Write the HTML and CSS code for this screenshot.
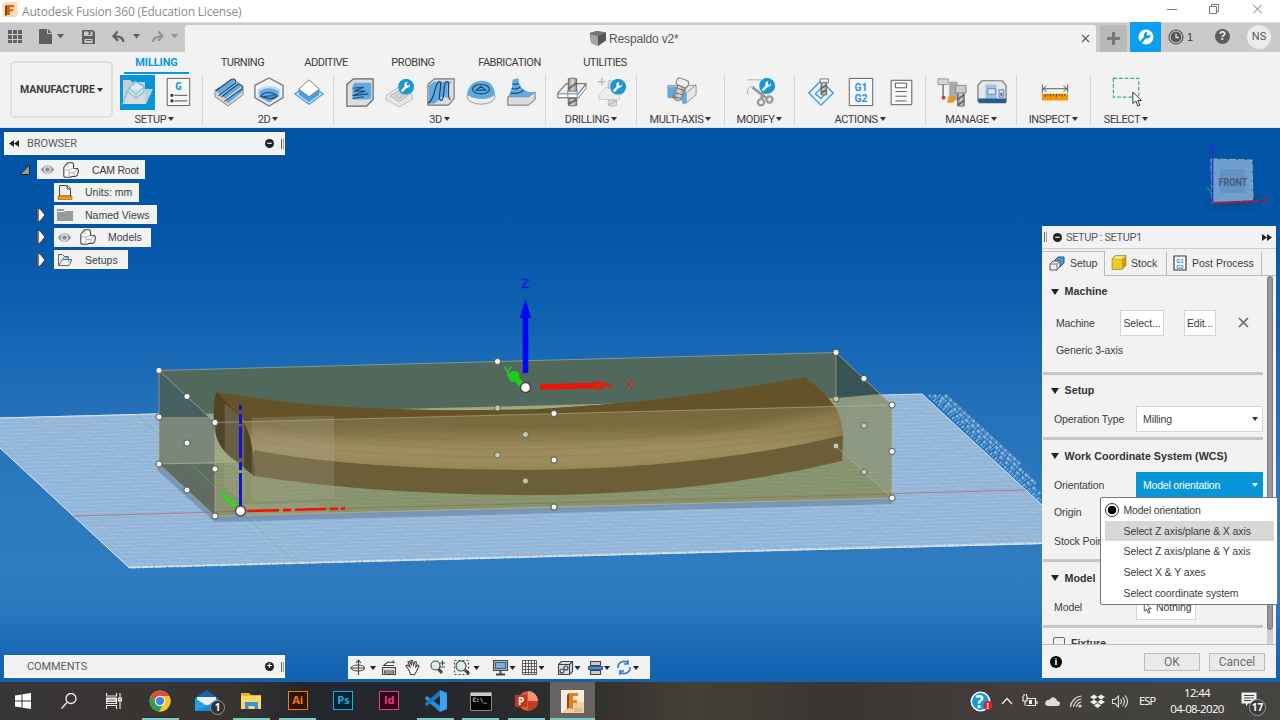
FILE: index.html
```html
<!DOCTYPE html>
<html lang="en">
<head>
<meta charset="utf-8">
<title>Autodesk Fusion 360 (Education License)</title>
<link rel="stylesheet" href="styles.css">
</head>
<body>
<svg class="defs" width="0" height="0">
  <defs>
    <linearGradient id="gBit"><stop offset="0" stop-color="#888"/><stop offset=".5" stop-color="#ddd"/><stop offset="1" stop-color="#888"/></linearGradient>
    <symbol id="wrench" viewBox="0 0 16 16"><circle cx="8" cy="8" r="8" fill="#1b97d5"/><path d="M4.2 11.8l4-4" stroke="#fff" stroke-width="2.4" stroke-linecap="round"/><path d="M11.900 5.200a2.900 2.900 0 1 1-2.300-2.100L8.400 5l.6 1.600 1.600.4z" fill="#fff"/></symbol>
    <symbol id="comp" viewBox="0 0 16 16"><path d="M.8 5.500L4.500.800h5l1 1.500v4l4 .2 1 2-1 4.500-2 1.500H9l-2 .8H1.500L.8 14z" fill="#fafafa" stroke="#444" stroke-width="1.100"/><path d="M1.500 8H6v7M6 8l3.500-1.500M6.500 10.500H11V14M11 10.500l3-3.500M5 1v4.500" fill="none" stroke="#aaa" stroke-width=".9"/></symbol>
    <symbol id="eye" viewBox="0 0 16 12"><path d="M.5 6Q8-3.500 15.500 6 8 15.500.5 6z" fill="#999"/><circle cx="8" cy="6" r="3.800" fill="#eee"/><circle cx="8" cy="6" r="2.500" fill="#888"/></symbol>
    <symbol id="openArrow" viewBox="0 0 10 14"><path d="M1 1L4 .800l5 6.200-5 6.200L1 13z" fill="#f4f4f4" stroke="#3a3a3a"/><path d="M2 1.500v11" stroke="#555" stroke-width="1.600"/></symbol>
    <symbol id="cursor" viewBox="0 0 10 16"><path d="M1 1v11.500l3-2.500 2 5 2-.8-2-4.700h3.500z" fill="#fff" stroke="#333"/></symbol>
  </defs>
</svg>

<header class="titlebar">
  <svg class="app" width="16" height="16" viewBox="0 0 16 16"><path d="M0 2l4-2h11l1 13-3 2H1z" fill="#fbd9b8"/><path d="M5 3h7v2.300H8v2h3.300v2H8V13H5z" fill="#c66a16"/><path d="M5 3L3 4v10l2-1z" fill="#8a4208"/></svg>
  <span class="title">Autodesk Fusion 360 (Education License)</span>
  <svg class="win" width="96" height="14" viewBox="0 0 96 14" fill="none" stroke="#777"><path d="M1 7.500h10M43.500 4.500h7v7h-7zM45.500 4V2.500h7v7H51M87 2.500l9 9M96 2.500l-9 9"/></svg>
</header>

<nav class="docbar">
  <div class="quick">
    <svg width="185" height="30" viewBox="0 22 185 30" fill="#606060">
      <path d="M8 30h4v4H8zM13 30h4v4h-4zM18 30h4v4h-4zM8 35h4v4H8zM13 35h4v4h-4zM18 35h4v4h-4zM8 40h4v3H8zM13 40h4v3h-4zM18 40h4v3h-4zM39 29h8v5h5v10H39zM48 29l4 4h-4zM57 34h7l-3.500 4.500z"/>
      <path d="M82 30h11l2 2v12H82zM84 31.500v4.500h8.500v-4.500zM84.500 39v4h8v-4z" fill-rule="evenodd"/><path d="M88.500 31h2v4h-2zM86 40h5.500v1H86z"/>
      <path d="M123.500 42q0-5.500-8.500-5.700M117.500 31.500l-4 4.700 4.500 4.500" fill="none" stroke="#606060" stroke-width="2.200"/><path d="M133 34h7l-3.500 4.500z"/>
      <g opacity=".5"><path d="M153 42q0-5.500 8.500-5.700M158.500 31.500l4 4.700-4.500 4.500" fill="none" stroke="#606060" stroke-width="2.200"/><path d="M171 34h7l-3.500 4.500z"/></g>
    </svg>
  </div>
  <div class="doctab">
    <svg width="16" height="15" viewBox="0 0 16 15"><path d="M0 2l7-2 9 1.500v8L8 15 1 12z" fill="#555"/><path d="M1 3l7 2v10l-7-3z" fill="#a5a5a5"/><path d="M0 2l7-2 9 1.500L8 5z" fill="#777"/></svg>
    <span>Respaldo v2*</span>
    <svg class="tabx" width="9" height="9" viewBox="0 0 9 9" stroke="#666" stroke-width="1.400"><path d="M1 1l7 7M8 1L1 8"/></svg>
  </div>
  <div class="plus"><svg width="13" height="13" viewBox="0 0 13 13"><path d="M0 6.500h13M6.500 0v13" stroke="#777" stroke-width="3"/></svg></div>
  <div class="ext"><svg width="16" height="16" viewBox="0 0 16 16"><circle cx="8" cy="8" r="7.500" fill="#fff"/><path d="M3.500 12.500l4.500-5" stroke="#0a9ce5" stroke-width="2.600"/><path d="M12.500 5.500a3.400 3.400 0 1 1-3-2.700L8.500 5.500l1.700 1.300z" fill="#0a9ce5"/><path d="M0 16L4 12" stroke="#0a9ce5" stroke-width="2"/></svg></div>
  <svg class="clockico" width="16" height="16" viewBox="0 0 16 16"><circle cx="8" cy="8" r="7" fill="none" stroke="#555" stroke-width="1.200"/><circle cx="8" cy="8" r="5.400" fill="#555"/><path d="M8 4.500V8.500h3" fill="none" stroke="#ddd" stroke-width="1.300"/></svg>
  <span class="jobs">1</span>
  <span class="help">?</span>
  <span class="avatar">NS</span>
</nav>

<section class="ribbon">
  <div class="workspace">MANUFACTURE <i class="dn"></i></div>
  <div class="tools">
    <div class="tabs">
      <span class="t1 on"><b>MILLING</b></span><span class="t2">TURNING</span><span class="t3">ADDITIVE</span><span class="t4">PROBING</span><span class="t5">FABRICATION</span><span class="t6">UTILITIES</span>
    </div>
    <div class="groups">
      <div class="group g1"><div class="icons">
        <svg class="ico active" viewBox="0 0 35 35"><path d="M3 5h7l2 2h13v22H3z" fill="#c9cfd3"/><path d="M6 17L15 6l10 6-8 12-9-3z" fill="#d8eefa" stroke="#6bbbe2"/><path d="M9 14h24l-7 15H4z" fill="#dcdcdc" fill-opacity=".85"/><path d="M9 13l7-6 8 5-8 7zM9 13v5l7 5v-4M24 12v5l-8 6M2 30L8 16" fill="none" stroke="#70bfe4"/></svg>
        <svg class="ico" viewBox="0 0 32 32"><path d="M4.500 1.500h24v29h-24z" fill="#f7f7f7" stroke="#5a5a5a"/><text x="16.500" y="14" class="gtext">G</text><path d="M12 19.500h14M12 25.500h14" stroke="#444"/><path d="M8 18h3v3H8zM8 24h3v3H8z" fill="#333"/></svg>
      </div><div class="cap">SETUP<i class="dn"></i></div></div>
      <div class="group g2"><div class="icons">
        <svg class="ico" viewBox="0 0 32 32"><path d="M1 14L21 3l10 7v9L15 31 1 21z" fill="#d5d5d5" stroke="#888"/><path d="M1 14L19 3l4 3L6 18zM8 20l17-13 4 3L12 23zM13 25l18-13v3L15 28z" fill="#62a9de"/><path d="M2 15L18 3q4-2 5 1t-2 4L5 20M8 21L25 8q4-1 5 2t-2 4L11 26" fill="none" stroke="#174d74" stroke-width="1.200"/></svg>
        <svg class="ico" viewBox="0 0 32 32"><path d="M1 9l15-8 15 8v13l-15 9-15-9z" fill="#f3f3f3" stroke="#777" stroke-width="1.400"/><path d="M4 13q12-7 24 0v8l-12 7-12-7z" fill="#bbdcf4"/><path d="M6 15q10-6 20 0v6l-10 6-10-6z" fill="#62a9de"/><path d="M7 21q4-6 12-4l6 3q-5 5-12 2zM9 21q6-1 13-1" fill="none" stroke="#174d74" stroke-width="1.200"/></svg>
        <svg class="ico" viewBox="0 0 32 32"><path d="M1 18l15-10 15 10-15 11z" fill="none" stroke="#2f9bea" stroke-width="1.300"/><path d="M5 13v6l11 8 11-8v-6L16 20z" fill="#4c9ddb"/><path d="M5 13L16 3l11 10-11 8z" fill="#fff" stroke="#777"/></svg>
      </div><div class="cap">2D<i class="dn"></i></div></div>
      <div class="group g3"><div class="icons">
        <svg class="ico" viewBox="0 0 32 32"><path d="M2 8l7-6h21v22l-7 7H2z" fill="#ddd" stroke="#666" stroke-width="1.300"/><path d="M10 6h18v17l-4 1H8V10z" fill="#62a9de"/><path d="M8 12l12-1-10 4 12 0-14 5 17-2M8 23l12-2" fill="none" stroke="#174d74" stroke-width="1.200"/></svg>
        <svg class="ico" viewBox="0 0 32 32"><path d="M1 20l13-9 15 8v5l-14 8-14-8z" fill="#e6e6e6" stroke="#bbb"/><path d="M6 20l8-5 10 5-9 6zM11 20l4-2 4 2-4 3z" fill="#ddd" stroke="#aaa"/><use href="#wrench" x="14" y="2" width="17" height="17"/></svg>
        <svg class="ico" viewBox="0 0 32 32"><path d="M2 8l7-6h21v21l-6 7H2z" fill="#ddd" stroke="#777" stroke-width="1.200"/><path d="M3 9h20v14q-5-5-9 1T3 28zM3 9l6-4h19l-5 4z" fill="#62a9de"/><path d="M2 28C10 25 9 6 14 5s-3 20 2 20S17 7 22 5s-1 18 4 19" fill="none" stroke="#174d74" stroke-width="1.400"/></svg>
        <svg class="ico" viewBox="0 0 32 32"><ellipse cx="16" cy="21" rx="15" ry="8" fill="#eee" stroke="#999"/><path d="M1 19Q3 5 16 4t15 15q-6 5-15 4.500T1 19z" fill="#62a9de"/><ellipse cx="16" cy="13" rx="9" ry="5" fill="none" stroke="#174d74" stroke-width="1.300"/><path d="M11 14l5-4 5 4z" fill="none" stroke="#174d74" stroke-width="1.300"/></svg>
        <svg class="ico" viewBox="0 0 32 32"><path d="M2 21h22l7-5v8l-7 6H2z" fill="#ddd" stroke="#666"/><path d="M7 3l6-2q1 12 11 15h7l-7 5H2q5-6 5-18z" fill="#62a9de"/><path d="M7 7q3 2 6 0M6 12q5 2 9-1M5 17q8 2 14-3" fill="none" stroke="#174d74" stroke-width="1.300"/></svg>
      </div><div class="cap">3D<i class="dn"></i></div></div>
      <div class="group g4"><div class="icons">
        <svg class="ico" viewBox="0 0 32 32"><path d="M1 17L10 7h21l-8 11v4H1z" fill="#eee" stroke="#777" stroke-width="1.300"/><path d="M1 18h22l8-10v4l-8 10H1z" fill="#fff" stroke="#777"/><path d="M12 2q4-2 9 0v13h-9zM12 23h9v7q-5 2-9 0z" fill="url(#gBit)" stroke="#666"/><path d="M12 13l9-7M12 29l9-5" stroke="#666" stroke-width="2"/><path d="M11.500 14v9M21.500 14v9" stroke="#2f9bea"/></svg>
        <svg class="ico" viewBox="0 0 32 32"><path d="M2 20l7-9h22l-7 10v3H2z" fill="#ececec" stroke="#ccc"/><path d="M12 4h9v8h-9zM12 25h9v5q-4 3-9 0z" fill="#ddd" stroke="#bbb"/><path d="M12 30l9-5M1 5h8M5 1v8" stroke="#bbb" stroke-width="1.500"/><use href="#wrench" x="14" y="2" width="17" height="17"/></svg>
      </div><div class="cap">DRILLING<i class="dn"></i></div></div>
      <div class="group g5"><div class="icons"><svg class="ico" viewBox="0 0 32 32"><path d="M1 9h30v10L19 29 13 22H1z" fill="#e6e6e6" stroke="#999"/><path d="M1 10h12v12H1zM14 20l7-6v13l-4 2z" fill="#62a9de"/><path d="M22 16l9-8" stroke="#888"/><path d="M12 8l8 4-6 13q-5 1-8-3z" fill="url(#gBit)" stroke="#777"/><path d="M9 17l8 2M11 12l8 3M7 21l8 2" stroke="#666"/><rect x="10" y="2" width="13" height="8" rx="3" transform="rotate(22 16 6)" fill="#eee" stroke="#777"/></svg></div><div class="cap">MULTI-AXIS<i class="dn"></i></div></div>
      <div class="group g6"><div class="icons"><svg class="ico" viewBox="0 0 32 32" fill="none"><path d="M2 3h14M2 19q-2-9 6-9" stroke="#aaa"/><path d="M7 11l14 11M20 12l-4 12" stroke="#999" stroke-width="3"/><circle cx="16" cy="27" r="3.300" stroke="#999" stroke-width="2.400"/><circle cx="25" cy="24" r="3.300" stroke="#999" stroke-width="2.400"/><use href="#wrench" x="14" y="1" width="17" height="17"/></svg></div><div class="cap">MODIFY<i class="dn"></i></div></div>
      <div class="group g7"><div class="icons">
        <svg class="ico" viewBox="0 0 32 32"><path d="M3 17L16 4l13 13-13 13z" fill="none" stroke="#2f9bea" stroke-width="1.400"/><path d="M10 18l6-6 5 5-5 6z" fill="none" stroke="#2f9bea" stroke-width="1.400"/><path d="M16 6h6v13h-6z" fill="url(#gBit)" stroke="#666"/><path d="M16 12l6-3M16 17l6-3" stroke="#666" stroke-width="2"/><path d="M15 2h9v4h-9z" fill="#eee" stroke="#777"/></svg>
        <svg class="ico" viewBox="0 0 32 32"><path d="M3.500 1.500h25v29h-25z" fill="#f7f7f7" stroke="#5a5a5a"/><text x="16" y="14.500" class="g1t">G1</text><text x="16" y="26.500" class="g1t">G2</text></svg>
        <svg class="ico" viewBox="0 0 32 32" fill="#fafafa" stroke="#555"><path d="M5.500 3.500h22v26h-22zM10 6.500h12v5H10zM10 15.500h12M10 20.500h12M10 25.500h12"/></svg>
      </div><div class="cap">ACTIONS<i class="dn"></i></div></div>
      <div class="group g8"><div class="icons">
        <svg class="ico" viewBox="0 0 32 32"><path d="M13 5h9v20h-9z" fill="#aaa"/><path d="M1 2h11v6H1z" fill="#d5d5d5" stroke="#999"/><path d="M6.500 8v12" stroke="#777" stroke-width="1.600"/><circle cx="7" cy="22" r="2" fill="#e22"/><path d="M12 21l8-1-2 7-7 1z" fill="#e79a1d"/><path d="M22 16h7v15h-7z" fill="url(#gBit)" stroke="#666"/><path d="M22 24l7-5M22 30l7-5" stroke="#666" stroke-width="2"/><path d="M20 9h11v8H20z" fill="#ccc" stroke="#888"/></svg>
        <svg class="ico" viewBox="0 0 32 32"><path d="M5 4h22l4 5v17H1V9z" fill="#e6e6e6" stroke="#777" stroke-width="1.300"/><path d="M9 8h12v18H9z" fill="#9cc2ea"/><path d="M11.500 12.500h8v6h-8z" fill="#e0e8f0" stroke="#5f88b5"/><path d="M23.500 13.500h5v8h-5z" fill="#bfe0ff" stroke="#4f88c5"/><path d="M25 17h2v3h-2z" fill="#c24"/><path d="M1 23h30v5H2z" fill="#215c8a"/></svg>
      </div><div class="cap">MANAGE<i class="dn"></i></div></div>
      <div class="group g9"><div class="icons"><svg class="ico" viewBox="0 0 32 32"><path d="M2.500 8v9M29.500 8v9M3 12.500h26M7 9.500l-4 3 4 3M25 9.500l4 3-4 3" fill="none" stroke="#555"/><path d="M2 18h28v7H2z" fill="#ef9708"/><path d="M5.500 18v3M8.500 18v2M11.500 18v3M14.500 18v2M17.500 18v3M20.500 18v2M23.500 18v3M26.500 18v2" stroke="#59400c"/></svg></div><div class="cap">INSPECT<i class="dn"></i></div></div>
      <div class="group g10"><div class="icons"><svg class="ico" viewBox="0 0 32 32"><path d="M1.500 1.500h27v20h-27z" fill="none" stroke="#31b765" stroke-width="1.300" stroke-dasharray="4 2"/><use href="#cursor" x="21" y="15" width="11" height="17"/></svg></div><div class="cap">SELECT<i class="dn"></i></div></div>
    </div>
  </div>
</section>

<main class="viewport">
  <svg class="scene" width="1280" height="554" viewBox="0 128 1280 554">
    <defs>
      <pattern id="grid" width="9" height="4" patternUnits="userSpaceOnUse" patternTransform="matrix(1 -.028 .95 .9 0 0)"><path d="M0 0H9M0 0V4" fill="none" stroke="#d3dce5" stroke-opacity=".55" stroke-width=".7"/></pattern>
      <linearGradient id="wood" x1="0" y1="405" x2="0" y2="470" gradientUnits="userSpaceOnUse"><stop offset="0" stop-color="#77683c"/><stop offset=".35" stop-color="#7d6e41"/><stop offset=".65" stop-color="#9c8b5c"/><stop offset="1" stop-color="#93824f"/></linearGradient>
      <filter id="soft" x="-5%" y="-50%" width="110%" height="200%"><feGaussianBlur stdDeviation="5"/></filter>
      <clipPath id="bodyClip"><path d="M217 392Q300 406 372 408Q450 412 540 409Q670 402 805 377L824 393L836 408Q843 425 843 436L842 461Q700 495 526 495Q370 494 255 476L254 476L232 458Q214 445 214 420Q213 400 217 392z"/></clipPath>
    </defs>
    <path d="M0 417.500L922 394L1042 505V544L129 568L0 448z" fill="#92b6d9"/>
    <path d="M0 417.500L922 394L1042 505V544L129 568L0 448z" fill="url(#grid)"/>
    <path d="M0 418L922 394L1042 505M0 448L129 567.500L1042 543.500" fill="none" stroke="#dbe6f0"/>
    <path d="M129 567.500L1042 543" fill="none" stroke="#dbe6f0" stroke-width="2.200" stroke-dasharray="7 1 3 2" opacity=".7"/>
    <g stroke="#a9c9e6" fill="none" opacity=".7"><path d="M929 395L1041 501" stroke-width="3" stroke-dasharray="2 1.500 1 2"/><path d="M934 395L1040 494" stroke-width="3" stroke-dasharray="3 1 1 2.500"/><path d="M939 395L1036 484" stroke-width="3" stroke-dasharray="1.500 1.600 4 1"/><path d="M945 395L1020 464" stroke-width="3" stroke-dasharray="3 1.200 1 1"/></g>
    <path d="M74 516L1025 490" stroke="#b87592"/><path d="M137 414L296 563" stroke="#60c994"/>
    <path d="M159 464L215 516L892 498V504L215 522L157 470z" fill="#697f9c" opacity=".6"/>

    <path d="M159 370.500L836 352.500V400L159 417z" fill="#50695c"/>
    <path d="M159 415L836 398V446L892 498L215 516L159 464z" fill="#9ba77f"/>
    <path d="M159 464L836 446L892 498L215 516z" fill="#86926b"/>
    <path d="M159 415L836 398V446L892 498L215 516L159 464z" fill="url(#grid)" opacity=".4"/>
    <path d="M159 370.500L215 422.500V516L159 464z" fill="#7b877a"/>
    <path d="M159 370.500L209 417L159 417z" fill="#465f62"/>
    <path d="M159 464H215V516z" fill="#606c61"/>
    <path d="M836 352.500L892 405V498L836 446z" fill="#8c9781"/><path d="M836 352.500L880 394L836 398z" fill="#385353"/>
    <path d="M850 398L892 405V498L838 450z" fill="url(#grid)" opacity=".3"/>
    <path d="M215 512L892 494" stroke="#94764e"/><path d="M160 434L215 487" stroke="#59a451"/>

    <g clip-path="url(#bodyClip)">
      <path d="M200 370H850V500H200z" fill="url(#wood)"/>
      <path d="M200 370H850V406L240 422L200 420z" fill="#655229"/>
      <path d="M254 430Q520 480 842 410V436Q700 469 526 470Q360 468 250 450z" fill="#a39263" opacity=".55" filter="url(#soft)"/>
      <path d="M254 450Q350 469 526 470Q700 469 845 435V500H250z" fill="#6c5e36"/>
      <g fill="none" stroke="#6f6036" stroke-width=".5" opacity=".35"><path d="M260 426Q540 459 838 418M262 433Q520 469 840 426M257 442Q530 477 842 432M280 418Q500 440 800 407M370 416Q600 445 810 401M300 410Q600 420 810 386"/></g>
      <path d="M200 385L217 392L240 417Q254 434 255 478L200 450z" fill="#514326"/>
    </g>
    <path d="M225 404L244 420V500L225 488zM252 418L333.500 416V498L252 500z" fill="#aaa793" opacity=".27" stroke="#cacaba" stroke-opacity=".5"/>
    <path d="M240 505L315 503L330 513L248 515z" fill="#a9ada0" opacity=".35"/>
    <g fill="none" stroke="#b5b795" opacity=".6"><path d="M159 370.500L836 352.500L892 405L215 422.500zM159 370.500V464L215 516L892 498V405M215 422.500V516M836 352.500V400M159 464L240 462M838 448L892 498"/></g>

    <path d="M240.500 405V507" stroke="#1414d6" stroke-width="3" stroke-dasharray="5 4 10 2 32 4 8 3 40"/><path d="M247 511L346 508.500" stroke="#f51000" stroke-width="2.600" stroke-dasharray="32 4 8 4 31 4 8 3 4"/><path d="M222 494L239 509" stroke="#0cf204" stroke-width="3"/>
    <path d="M525.500 373V312" stroke="#0404fb" stroke-width="5.500"/><path d="M520 318L525.500 299L531 318z" fill="#0404fb"/>
    <path d="M540 387L596 385.500" stroke="#ee1208" stroke-width="5.500"/><path d="M595 380L613.500 385L595 391z" fill="#cf2617"/>
    <path d="M514 377L522 385" stroke="#1bcf15" stroke-width="6"/><circle cx="514" cy="376.500" r="5.500" fill="#1bcf15"/>
    <text x="521.500" y="288" class="axis z">Z</text><text x="625.500" y="388.500" class="axis x">X</text><text x="504" y="376" class="axis y">Y</text>

    <g fill="#c8c8b2" stroke="#60604d"><circle cx="497.500" cy="408" r="3"/><circle cx="497.500" cy="455" r="3"/><circle cx="525.500" cy="434.500" r="3"/><circle cx="525.500" cy="481" r="3"/><circle cx="836" cy="399" r="3"/><circle cx="836" cy="446" r="3"/><circle cx="864" cy="425.500" r="3"/><circle cx="864" cy="472" r="3"/></g>
    <g fill="#f4f4f4" stroke="#555"><circle cx="159" cy="370.500" r="3.100"/><circle cx="187" cy="396.500" r="3.100"/><circle cx="159" cy="417" r="3.100"/><circle cx="215" cy="422.500" r="3.100"/><circle cx="187" cy="443" r="3.100"/><circle cx="159" cy="464" r="3.100"/><circle cx="215" cy="469" r="3.100"/><circle cx="187" cy="490" r="3.100"/><circle cx="215" cy="516" r="3.100"/><circle cx="497.500" cy="361.500" r="3.100"/><circle cx="836" cy="352.500" r="3.100"/><circle cx="864" cy="378.500" r="3.100"/><circle cx="892" cy="405" r="3.100"/><circle cx="892" cy="451.500" r="3.100"/><circle cx="892" cy="498" r="3.100"/><circle cx="554" cy="413.500" r="3.100"/><circle cx="554" cy="460" r="3.100"/><circle cx="554" cy="507" r="3.100"/></g>
    <g fill="#fff" stroke="#444" stroke-width="1.400"><circle cx="240.500" cy="511" r="5"/><circle cx="525.500" cy="387.500" r="5"/></g>

    <ellipse cx="1233" cy="202" rx="25" ry="5" fill="#033c78" opacity=".55" filter="url(#soft)"/>
    <path d="M1211 159l41 1 1 40-41 3z" fill="#6f9fcd" stroke="#a0a9ad" stroke-dasharray="7 2"/><path d="M1220 169h25v24h-25z" fill="#6593c1"/>
    <path d="M1212.500 153V203" stroke="#2630cf" stroke-width="1.600"/><path d="M1213 203L1259 201" stroke="#a01d46" stroke-width="1.800"/><path d="M1207 187l3 4 3-5M1210 191v3" stroke="#12a05c" fill="none"/>
    <text x="1208.500" y="152.500" class="vz">Z</text><text x="1260.500" y="204.500" class="vx">X</text><text x="1218.500" y="186" class="front" textLength="29" lengthAdjust="spacingAndGlyphs">FRONT</text>
  </svg>

  <aside class="browser">
    <div class="bar"><svg width="10" height="7" viewBox="0 0 10 7"><path d="M5 0v7L0 3.500zM10 0v7L5 3.500z" fill="#222"/></svg><span>BROWSER</span><i class="knob">−</i><i class="grip"></i></div>
    <div class="node n0"><svg class="tw" width="10" height="10" viewBox="0 0 10 10"><path d="M9.500 0v9.500H0z" fill="#999" stroke="#222"/></svg><div class="chip c1"><svg width="15" height="11"><use href="#eye"/></svg><svg width="16" height="16"><use href="#comp"/></svg><span>CAM Root</span></div></div>
    <div class="node n1"><div class="chip c2"><svg width="16" height="15" viewBox="0 0 16 15"><path d="M2.500.5h8l3 3V11h-11z" fill="#eee" stroke="#444"/><path d="M10 .5V4h3.500" fill="none" stroke="#444"/><path d="M1 11h14v3.500H1z" fill="#e8a317" stroke="#8f6208" stroke-width=".6"/></svg><span>Units: mm</span></div></div>
    <div class="node n1"><svg class="tw" width="10" height="14"><use href="#openArrow"/></svg><div class="chip c3"><svg width="16" height="13" viewBox="0 0 16 13"><path d="M0 1h7v2H0zM0 4h7l1-1h8v10H0z" fill="#999"/></svg><span>Named Views</span></div></div>
    <div class="node n1"><svg class="tw" width="10" height="14"><use href="#openArrow"/></svg><div class="chip c4"><svg width="15" height="11"><use href="#eye"/></svg><svg width="16" height="16"><use href="#comp"/></svg><span>Models</span></div></div>
    <div class="node n1"><svg class="tw" width="10" height="14"><use href="#openArrow"/></svg><div class="chip c5"><svg width="16" height="14" viewBox="0 0 16 14"><path d="M1.500 12.500V1.500h4l2 2h4v2M1.500 12.500l4-6h9.500l-3 6z" fill="none" stroke="#666"/><path d="M4 8l3-4 4 1 1 4" fill="none" stroke="#389cd0"/></svg><span>Setups</span></div></div>
  </aside>

  <div class="bar comments"><span>COMMENTS</span><i class="knob">+</i><i class="grip"></i></div>

  <div class="navbar">
    <svg width="302" height="23" viewBox="348 656 302 23" fill="none" stroke="#444" stroke-width="1.100">
      <ellipse cx="358" cy="668" rx="6.500" ry="3"/><path d="M358.500 660v15M356 663l2.500-3 2.500 3M350 668h15"/>
      <path d="M382.500 667.500h13v7h-13zM384 665l4-3 6 .5-1-2M383 665.500h11M384.500 671h9v2h-9z" fill="#ddd"/>
      <path d="M409 670l-3-4 1-1 3 2-2-5 1.500-.5 2 4-.5-5h1.500l1 5 1.500-4 1.500.5-.8 5 2.300-2 1 1-3 6-1.500 2.500h-4z" fill="#fff"/>
      <circle cx="435.500" cy="665.500" r="4.500" fill="#dcebf0"/><path d="M438.500 669l3.500 4" stroke-width="3"/><path d="M440 663h5M442.500 660.500v5M440 667h5"/>
      <path d="M454.500 660.500h14v14h-14z" stroke-dasharray="2 2"/><circle cx="461" cy="666" r="5" fill="#d8ecec"/><path d="M465 670l4 4" stroke-width="3"/>
      <path d="M493.500 660.500h14v10h-14z" fill="#bbb"/><path d="M495.500 662.500h10v6h-10z" fill="#7faede" stroke="#356193"/><path d="M500.500 671v3M496 674.500h9" stroke-width="2"/>
      <path d="M522.500 660.500h14v14h-14zM525.500 660v14M528.500 660v14M531.500 660v14M534.500 660v14M522 663.500h15M522 666.500h15M522 669.500h15M522 672.500h15" stroke-width=".8"/>
      <path d="M558.500 664.500l3-3h11v10l-3 3h-11z" fill="#d2dfed"/><path d="M558.500 664.500h11v10M569.500 664.500l3-3"/><circle cx="562" cy="671" r="2" fill="#d2dfed"/><circle cx="566" cy="668" r="2"/>
      <path d="M590.500 661.500h10v4h-10z" fill="#ccc"/><path d="M588.500 666.500h14v3h-14z" fill="#4e8ed2" stroke="#245c99"/><path d="M590.500 670.500h10v4h-10z" fill="#ccc"/>
      <path d="M618 668a6 6 0 0 1 10-5M628 660v4h-4M630 667a6 6 0 0 1-10 5M620 675v-4h4" stroke="#347ac8" stroke-width="1.600"/>
      <path d="M370 666h6l-3 4zM473.500 666h6l-3 4zM509.500 666h6l-3 4zM538.500 666h6l-3 4zM574.500 666h6l-3 4zM604 666h6l-3 4zM633 666h6l-3 4z" fill="#222" stroke="none"/>
    </svg>
  </div>

  <aside class="panel">
    <header class="phead"><i class="grip"></i><i class="knob">−</i><span>SETUP : SETUP1</span><svg width="10" height="7" viewBox="0 0 10 7"><path d="M0 0v7l5-3.500zM5 0v7l5-3.500z" fill="#222"/></svg></header>
    <div class="ptabs">
      <div class="pt a on"><svg width="16" height="15" viewBox="0 0 16 15"><path d="M6 4l3-3h6v6l-4 4H6z" fill="#4a9bd1" stroke="#245d86"/><path d="M1 8l3-3h7v5l-3 4H1z" fill="#eee" stroke="#555"/><path d="M1 8h7v6M8 8l3-3" fill="none" stroke="#777"/></svg><span>Setup</span></div>
      <div class="pt b"><svg width="16" height="15" viewBox="0 0 16 15"><path d="M1 4l3-3.500h11v10L11 14.500H1z" fill="#c99a13" stroke="#a87d10" stroke-width=".6"/><path d="M1.500 4.500H11v9.500H1.500z" fill="#e8cf25"/><path d="M2 4l2.500-3h10L11.500 4z" fill="#f6e270"/></svg><span>Stock</span></div>
      <div class="pt c"><svg width="14" height="16" viewBox="0 0 14 16"><path d="M1 1h12v14H1z" fill="#fff" stroke="#333" stroke-width="1.200"/><text x="7" y="7.500" class="mini">G1</text><text x="7" y="13.500" class="mini">G2</text></svg><span>Post Process</span></div>
    </div>
    <div class="pbody">
      <div class="form">
        <section class="s1"><h3>Machine</h3>
          <div class="mrow"><span class="lab">Machine</span><span class="btn sel">Select...</span><span class="btn edit">Edit...</span><svg width="11" height="11" viewBox="0 0 11 11" stroke="#666" stroke-width="1.600"><path d="M1 1l9 9M10 1l-9 9"/></svg></div>
          <div class="generic">Generic 3-axis</div></section>
        <section class="s2"><h3>Setup</h3><div class="row"><span class="lab">Operation Type</span><span class="select">Milling<i class="dn"></i></span></div></section>
        <section class="s3"><h3>Work Coordinate System (WCS)</h3>
          <div class="row"><span class="lab">Orientation</span><span class="select blue">Model orientation<i class="dn"></i></span></div>
          <div class="row tall"><span class="lab">Origin</span></div><div class="row tall"><span class="lab">Stock Point</span></div></section>
        <section class="s4"><h3>Model</h3><div class="row"><span class="lab">Model</span><span class="nothing"><svg width="9" height="13"><use href="#cursor"/></svg>Nothing</span></div></section>
        <section class="s5"><i class="cb"></i>Fixture</section>
      </div>
      <div class="scroll"><i></i></div>
    </div>
    <footer class="pfoot"><i class="info">i</i><span class="fb">OK</span><span class="fb">Cancel</span></footer>
  </aside>

  <ul class="menu">
    <li><i class="radio"></i>Model orientation</li><li class="hov">Select Z axis/plane &amp; X axis</li><li>Select Z axis/plane &amp; Y axis</li><li>Select X &amp; Y axes</li><li>Select coordinate system</li>
  </ul>
</main>

<footer class="taskbar">
  <div class="apps">
    <div class="task"><svg width="16" height="16" viewBox="0 0 16 16" fill="#fff"><path d="M0 2.500l6.500-1v6H0zM7.500 1.300L16 0v7.500H7.500zM0 8.500h6.500v6L0 13.500zM7.500 8.500H16V16l-8.500-1.300z"/></svg></div>
    <div class="task"><svg width="16" height="16" viewBox="0 0 16 16" fill="none" stroke="#eee" stroke-width="1.300"><circle cx="10" cy="5.500" r="5"/><path d="M6 9.500L.5 15.500"/></svg></div>
    <div class="task"><svg width="17" height="16" viewBox="0 0 17 16" fill="none" stroke="#eee" stroke-width="1.100"><path d="M.5 0v3h10V0M.5 16v-3.500h10V16M.5 5h10v5.500H.5zM14 0v16M12.500 5h3v3h-3z"/><path d="M1 5.500h9v3H1z" fill="#aaa"/></svg></div>
    <div class="task run"><svg width="22" height="22" viewBox="0 0 22 22"><circle cx="11" cy="11" r="10.500" fill="#f7c52b"/><path d="M11 11H21.300A10.500 10.500 0 0 0 2 5.800L6.500 13.500z" fill="#dd4b3e"/><path d="M2 5.800A10.500 10.500 0 0 0 10 21.500L15 13.500 6.500 13.500z" fill="#2b9e58"/><path d="M11 6h9.300A10.500 10.500 0 0 1 10 21.500l5-8z" fill="#f7c52b"/><circle cx="11" cy="11" r="5.200" fill="#fff"/><circle cx="11" cy="11" r="4.200" fill="#4285e8"/></svg></div>
    <div class="task mail"><svg width="23" height="22" viewBox="0 0 23 22"><path d="M0 8L11.500 0 23 8v13H0z" fill="#1466b2"/><path d="M2 7h19v9H2z" fill="#eef"/><path d="M0 8l12 8L23 8v13H0z" fill="#24a2e8"/><path d="M0 21l12-6 11 6z" fill="#1b8ad4"/></svg><b class="count">1</b></div>
    <div class="task run"><svg width="21" height="18" viewBox="0 0 21 18"><path d="M0 1h8l2 2h10v14H0z" fill="#e9b830"/><path d="M0 4h20v13H0z" fill="#fbd966"/><path d="M4 10h13v7h-3.500v-3h-6v3H4z" fill="#3a93d8"/></svg></div>
    <div class="task run"><span class="adobe ai">Ai</span></div>
    <div class="task"><span class="adobe ps">Ps</span></div>
    <div class="task"><span class="adobe id">Id</span></div>
    <div class="task run"><svg width="23" height="22" viewBox="0 0 23 22"><path d="M1 7.500L3 6l13 10v6L1 9z" fill="#2490dc"/><path d="M16 0v6L3 16l-2-1.500v-1z" fill="#1b78bd"/><path d="M16 0l7 3v16l-7 3z" fill="#39a3ef"/></svg></div>
    <div class="task run"><svg width="22" height="19" viewBox="0 0 22 19"><path d="M.5.5h21v18H.5z" fill="#050505" stroke="#888"/><path d="M1 1h20v3H1z" fill="#ccc"/><text x="2.500" y="10" class="cmd">C:\_</text></svg></div>
    <div class="task run"><svg width="23" height="22" viewBox="0 0 23 22"><circle cx="13" cy="11" r="10" fill="#d85a38"/><path d="M13 1a10 10 0 0 1 10 10H13z" fill="#f59276"/><path d="M13 11h10a10 10 0 0 1-10 10z" fill="#c53c20"/><path d="M0 5h12v12H0z" fill="#c7351b"/><text x="3" y="15" class="pp">P</text></svg></div>
    <div class="task run fusion"><svg width="23" height="23" viewBox="0 0 23 23"><path d="M0 0h23v23H0z" fill="#fbebdc"/><path d="M0 23L12 12h11v11z" fill="#f4cda8"/><path d="M8 3h9v3h-5v4h4v3h-4v6l-4-1z" fill="#dd8324"/><path d="M8 3L6 5v14l2-1z" fill="#8a4a14"/><text x="13" y="21.500" class="f360">360</text></svg></div>
  </div>
  <div class="tray">
    <svg width="160" height="28" viewBox="968 687 160 28">
      <circle cx="980.500" cy="701.500" r="9.200" fill="#1c9ad8" stroke="#fff" stroke-width="1.500"/><text x="975.500" y="707.500" class="q">?</text><circle cx="988" cy="705.500" r="4.500" fill="#e31b23"/><text x="986.500" y="709" class="ex">!</text>
      <path d="M1002 704l5-5.500 5 5.500" fill="none" stroke="#eee" stroke-width="1.300"/>
      <path d="M1027.500 698.500h8v7h-9M1023 696v5h4v-5M1024 694v2M1026.500 694v2M1025 701v4.500M1037 701v3" fill="none" stroke="#eee" stroke-width="1.200"/><path d="M1029 700h3v4h-3z" fill="#eee"/>
      <path d="M1048 706q-4-1-2.500-4t4-2q2-4 5.500-2 2 1 2 3 3 0 3 2.500t-3 2.500z" fill="#ddd"/>
      <g fill="none" stroke="#ddd" stroke-width="1.200"><path d="M1070.500 707a12 12 0 0 1 11-11M1073.500 707a9 9 0 0 1 8-8M1076.500 707a6 6 0 0 1 5-5"/><circle cx="1080" cy="706" r="1" fill="#eee"/></g>
      <path d="M1090 697l4-2.500 3.500 2.500-3.500 2.500zM1097.500 697l3.500-2.500 4 2.500-4 2.500zM1090 702l4-2.500 3.500 2.500-3.500 2.500zM1097.500 702l3.500-2.500 4 2.500-4 2.500zM1094 705.500l3.500-2.500 3.500 2.500-3.500 2.500z" fill="#eee"/>
      <path d="M1112.500 699.500h2.500l3.500-3.500v11l-3.500-3.500h-2.500zM1120.500 699q2 2.500 0 5M1122.500 697q4 4.500 0 9M1125 695.500q5 6 0 12" fill="none" stroke="#ddd" stroke-width="1.100"/>
    </svg>
    <span class="lang">ESP</span>
    <span class="time">12:44<br>04-08-2020</span>
    <div class="note"><svg width="16" height="15" viewBox="0 0 16 15"><path d="M.5.500h15v11H7l-2 3v-3H.5z" fill="#eee"/><path d="M3 3.500h10M3 6h10M3 8.500h7" stroke="#444"/></svg><b class="count">17</b></div>
  </div>
</footer>
</body>
</html>
```
FILE: styles.css
```css
* { box-sizing: border-box; }
body { margin: 0; width: 1280px; height: 720px; overflow: hidden; display: flex; flex-direction: column; font: 10.5px "Liberation Sans", Arial, sans-serif; color: #3c3c3c; }
svg { display: block; flex: none; }
i { font-style: normal; }
.defs { position: absolute; }
.dn { display: inline-block; width: 0; height: 0; border: 3.5px solid transparent; border-top: 4.5px solid #333; border-bottom: 0; margin-left: 2px; vertical-align: 2px; }

.titlebar { height: 22px; background: #fff; display: flex; align-items: center; padding-left: 2px; flex: none; }
.app { margin-top: -3px; }
.title { margin-left: 4px; font: 12px "Open Sans", sans-serif; color: #8b8b8b; letter-spacing: -.19px; }
.win { margin: -4px 18px 0 auto; }

.docbar { height: 30px; background: #cacaca; border-top: 1px solid #ddd; display: flex; flex: none; }
.quick { width: 185px; }
.quick svg { margin-top: -1px; }
.doctab { width: 911px; margin-top: 2px; background: #f2f2f2; border-radius: 3px 3px 0 0; display: flex; align-items: center; padding-left: 405px; font-size: 12px; color: #555; }
.doctab span { margin-left: 3px; letter-spacing: -.15px; }
.tabx { margin: 0 6px 0 auto; }
.plus { width: 27px; margin: 2px 3px 0 4px; background: #b9b9b9; border-radius: 3px 3px 0 0; display: flex; align-items: center; justify-content: center; }
.ext { width: 31px; margin-top: -1px; background: #0a9ff0; display: flex; align-items: center; justify-content: center; }
.clockico { margin: 6px 0 0 7px; }
.jobs { width: 6px; margin: 8px 0 0 3px; font-size: 11px; }
.help { width: 15px; height: 15px; border-radius: 50%; background: #5c5c5c; color: #eee; font: bold 12px/15px "Liberation Sans", sans-serif; text-align: center; margin: 6px 0 0 22px; }
.avatar { width: 24px; height: 24px; border-radius: 50%; background: #ececec; margin: 2px 0 0 17px; text-align: center; font: 11px/24px Roboto, sans-serif; color: #555; }

.ribbon { height: 76px; background: #f2f2f2; border-bottom: 1px solid #dde3ea; display: flex; flex: none; }
.workspace { width: 103px; height: 57px; margin: 9px 5px 0 10px; border: 2px solid #e0e0e0; border-radius: 5px; display: flex; align-items: center; justify-content: center; font: bold 10.5px Roboto, sans-serif; letter-spacing: -.03px; }
.workspace .dn { margin-top: 1px; }
.tabs { display: flex; height: 22px; font: 11px/21px Roboto, sans-serif; letter-spacing: -.45px; text-align: center; }
.tabs span { height: 22px; }
.t1 { width: 65px; margin-left: 6px; letter-spacing: -.1px; }
.t1.on { border-bottom: 2px solid #0a97d9; color: #0a97d9; }
.t1 b { font-size: 11px; }
.t2 { width: 107px; }.t3 { width: 60px; }.t4 { width: 114px; }.t5 { width: 79px; }.t6 { width: 112px; }
.groups { display: flex; }
.group { border-right: 1px solid #d4d4d4; height: 49px; margin-top: 1px; position: relative; }
.group.g10 { border: 0; }
.icons { display: flex; justify-content: center; gap: 10.400px; height: 34px; align-items: center; padding-left: 2px; }
.ico { width: 30px; height: 30px; }
.ico.active { width: 35px; height: 35px; background: #0696d7; margin: 0 -2.500px; }
.cap { text-align: center; font: 11px/21px Roboto, sans-serif; letter-spacing: -.35px; white-space: nowrap; }
.g1 { width: 85px; }.g1 .icons { margin-left: -7px; }.g1 .cap { margin-left: -11px; }
.g2 { width: 131px; }.g3 { width: 212px; }.g4 { width: 91px; }.g5 { width: 88px; }.g6 { width: 70px; }.g7 { width: 131px; }.g8 { width: 91px; }.g9 { width: 74px; }.g10 { width: 70px; }
.gtext { font: bold 12px "DejaVu Sans Mono", monospace; fill: #1e94ec; text-anchor: middle; }
.g1t { font: bold 11px Roboto, sans-serif; fill: #1e94ec; text-anchor: middle; }

.viewport { position: relative; height: 554px; flex: none; background: linear-gradient(#0054a6 0, #0355a7 18%, #0d60b0 32%, #2370b9 50%, #2b78be 65%, #2f7cc1 80%, #2a77be 87%, #1766b3 96%, #1262b0 100%); }
.scene { position: absolute; inset: 0; }
.axis { font: 12px "Liberation Sans", sans-serif; }
.axis.z { fill: #1212e8; stroke: #1212e8; stroke-width: .3px; }.axis.x { fill: #cb2c1c; }.axis.y { fill: #1bcf15; stroke: #1bcf15; stroke-width: .4px; }
.vz { font: 12px "Liberation Sans", sans-serif; fill: #2630cf; stroke: #2630cf; stroke-width: .4px; }.vx { font: 12px "Liberation Sans", sans-serif; fill: #8b2451; }
.front { font: bold 10px Roboto, sans-serif; fill: #465f7d; }

.bar { width: 281px; height: 23px; background: #f2f2f2; border: 1px solid #fff; display: flex; align-items: center; padding-left: 4px; color: #5a5a5a; }
.bar span { font: 11px Roboto, sans-serif; letter-spacing: -.1px; }
.knob { width: 9px; height: 9px; border-radius: 50%; background: #222; color: #fff; font: bold 9px/9px "Liberation Sans", sans-serif; text-align: center; }
.bar .knob { margin-left: auto; }
.grip { width: 3px; height: 10px; border-left: 1px solid #666; border-right: 1px solid #999; }
.bar .grip { margin-left: 7px; }
.browser { position: absolute; left: 4px; top: 4px; }
.browser .bar span { margin-left: 8px; }
.comments { position: absolute; left: 4px; top: 527px; }
.comments span { margin-left: 18px; }
.node { height: 22.500px; display: flex; align-items: center; position: relative; }
.node.n0 { padding-left: 16px; margin-top: 3.500px; }
.n0 .tw { margin-right: 7px; }
.n1 { justify-content: flex-start; padding-left: 50px; }
.n1 .tw { position: absolute; left: 32px; top: 4px; }
.chip { height: 19px; background: #f2f2f2; display: flex; align-items: center; padding-left: 3px; }
.chip span { margin-left: 12px; white-space: nowrap; }
.chip svg + svg { margin-left: 8px; }
.c1 { width: 108px; }.c2 { width: 85px; }.c3 { width: 103px; }.c4 { width: 97px; }.c5 { width: 74px; }
.c1 span { margin-left: 13px; letter-spacing: -.2px; }
.c4 span { margin-left: 12px; }
.navbar { position: absolute; left: 348px; top: 528px; width: 302px; height: 23px; background: #f2f2f2; }

.panel { position: absolute; left: 1042px; top: 98px; width: 234px; height: 452px; background: #f2f2f2; display: flex; flex-direction: column; }
.phead { height: 23px; border-bottom: 1px solid #ccc; display: flex; align-items: center; padding: 0 4px 0 2px; color: #5a5a5a; flex: none; }
.phead .knob { margin: 0 4px 0 6px; }
.phead span { font: 11px Roboto, sans-serif; letter-spacing: -.4px; }
.phead svg { margin-left: auto; }
.ptabs { height: 25px; margin: 2px 0 0; display: flex; flex: none; border-bottom: 1px solid #bbb; }
.pt { display: flex; align-items: center; border-right: 1px solid #bbb; border-top: 1px solid transparent; padding: 0 0 2px 7px; height: 24px; }
.pt span { margin-left: 5px; white-space: nowrap; }
.pt.on { height: 25px; background: #f2f2f2; border-top-color: #bbb; }
.pt.a { width: 63px; }.pt.b { width: 62px; padding-left: 6px; }.pt.c { width: 95px; padding-left: 6px; }
.pt.b span { margin-left: 4px; }
.mini { font: bold 5.500px "Liberation Sans", sans-serif; fill: #1e78d0; text-anchor: middle; }
.pbody { height: 368px; flex: none; overflow: hidden; display: flex; }
.form { width: 220px; margin-left: 1px; }
.form section { border-bottom: 3px solid #c6c6c6; }
h3 { margin: 0; font-size: 10.700px; color: #333; height: 31px; line-height: 31px; display: flex; align-items: center; padding-left: 8px; letter-spacing: .03px; white-space: nowrap; }
h3::before { content: ""; border: 4.500px solid transparent; border-top: 6px solid #222; border-bottom: 0; margin-right: 5.500px; }
.s1 { height: 99px; }.s2 { height: 65px; }.s3 { height: 122px; }.s4 { height: 66px; }
.s3 h3, .s4 h3 { height: 32px; }
.mrow { display: flex; align-items: center; height: 31px; padding-left: 13px; letter-spacing: -.15px; }
.mrow .lab { width: 64px; }
.btn { height: 26px; border: 1px solid #d5d5d5; background: #fff; line-height: 24px; text-align: center; white-space: nowrap; letter-spacing: -.1px; }
.btn.sel { width: 44px; margin-right: 20px; }.btn.edit { width: 32px; margin-right: 22px; }
.generic { padding: 6px 0 0 13px; letter-spacing: -.05px; }
.row { display: flex; align-items: center; height: 26px; padding-left: 11px; white-space: nowrap; letter-spacing: -.1px; }
.row .lab { width: 82px; }
.row.tall { height: 28.500px; }
.select { width: 127px; height: 26px; border: 1px solid #d5d5d5; background: #fff; display: flex; align-items: center; padding: 0 4px 0 6px; }
.select .dn { margin-left: auto; }
.select.blue { background: #0696d7; color: #fff; border-color: #0696d7; letter-spacing: -.2px; }
.blue .dn { border-top-color: #fff; }
.nothing { width: 60px; height: 26px; border: 1px solid #d5d5d5; background: #fff; display: flex; align-items: center; gap: 4px; padding-left: 6px; }
.s5 { height: 33px; display: flex; align-items: center; font-weight: bold; padding-left: 10px; }
.cb { width: 12px; height: 12px; border: 1px solid #666; border-radius: 2px; margin-right: 6px; }
.scroll { width: 6px; margin-left: 4px; background: #d0d0d0; }
.scroll i { display: block; height: 354px; background: #969696; border: 1px solid #7d7d7d; border-radius: 3px; }
.pfoot { flex: 1; border-top: 1px solid #bbb; display: flex; align-items: center; gap: 9px; padding: 0 11px 0 8px; }
.info { width: 12px; height: 12px; border-radius: 50%; background: #000; color: #fff; font: bold 10px/12px "Liberation Serif", serif; text-align: center; margin-right: auto; }
.fb { width: 56px; height: 18px; border: 1px solid #bbb; background: #eaeaea; font: 12px/16px Roboto, sans-serif; text-align: center; color: #6c6c6c; }

.menu { position: absolute; left: 1100px; top: 369px; width: 178px; height: 108px; margin: 0; padding: 2px 3px 2px 4px; background: #fff; border: 1px solid #777; border-radius: 2px; list-style: none; }
.menu li { height: 20.600px; display: flex; align-items: center; padding-left: 18.500px; position: relative; white-space: nowrap; letter-spacing: -.1px; }
.menu .hov { background: #d8d8d8; }
.menu li:first-child { letter-spacing: -.2px; }
.radio { position: absolute; left: 0; top: 3px; width: 14px; height: 14px; border: 1.500px solid #333; border-radius: 50%; background: radial-gradient(#000 0 4px, #fff 4.600px); }

.taskbar { height: 38px; flex: none; display: flex; justify-content: space-between; color: #fff; background: linear-gradient(90deg, #393637 0, #38332f 18%, #24272c 24%, #24272b 34%, #312f2d 46%, #444038 54%, #393632 65%, #423f3c 80%, #454440 100%); }
.apps { display: flex; }
.task { width: 45.800px; display: flex; align-items: center; justify-content: center; position: relative; }
.run { background: linear-gradient(#79cbc4, #79cbc4) 50% 100% / 37px 2px no-repeat; }
.fusion { background-color: #666462; background-size: 100% 2px; }
.adobe { width: 20px; height: 19px; font: bold 11px/15px "Open Sans", sans-serif; border: 1.500px solid; text-align: center; margin-top: -2px; }
.ai { color: #f57c0b; background: #2c1500; }.ps { color: #12b3e4; background: #04202c; }.id { color: #ec3c85; background: #2f0515; }
.count { position: absolute; width: 15px; height: 15px; border-radius: 50%; border: 1px solid #999; background: #2c3137; font: bold 10px/13px "Open Sans", sans-serif; text-align: center; }
.mail .count { left: 27px; top: 18px; }
.cmd { font: bold 6px "DejaVu Sans Mono", monospace; fill: #ddd; }
.pp { font: bold 10px "Open Sans", sans-serif; fill: #fff; }
.f360 { font: bold 5px "Open Sans", sans-serif; fill: #dfa269; }
.tray { width: 312px; display: flex; align-items: center; font: 11.500px/16.500px "Open Sans", sans-serif; }
.q { font: bold 17px "Open Sans", sans-serif; fill: #fff; }.ex { font: bold 9px "Open Sans", sans-serif; fill: #fff; }
.lang { width: 30px; margin-left: 11px; font-size: 11px; letter-spacing: -.8px; }
.time { width: 64px; margin-left: -4px; text-align: center; letter-spacing: -.65px; white-space: nowrap; }
.note { position: relative; margin-left: 2px; padding: 0 10px 3px; }
.note .count { left: 18px; top: 7px; width: 17px; height: 17px; line-height: 15px; background: #3b3b3b; }
```
